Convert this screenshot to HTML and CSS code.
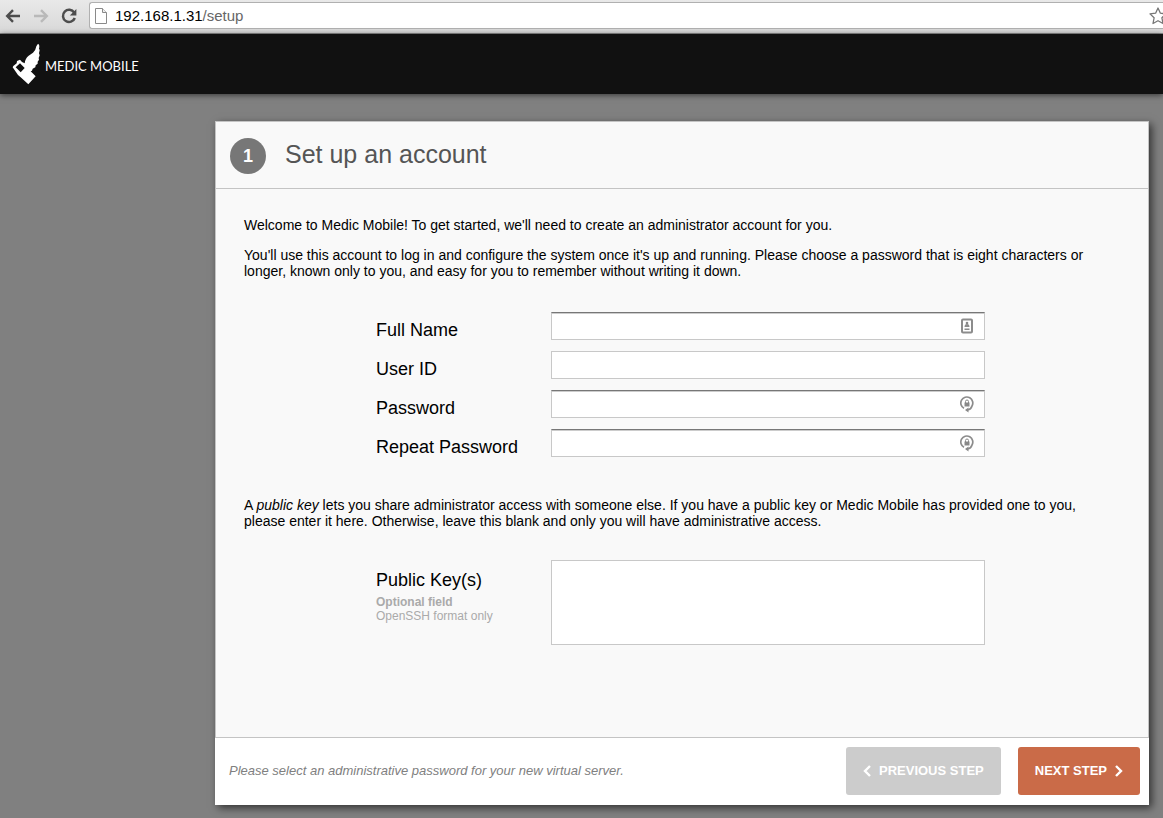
FILE: index.html
```html
<!DOCTYPE html>
<html lang="en">
<head>
<meta charset="utf-8">
<meta name="viewport" content="width=device-width, initial-scale=1">
<title>Medic Mobile Setup</title>
<link rel="stylesheet" href="styles.css">
</head>
<body>
<div class="toolbar">
  <button class="tool" type="button" aria-label="Back">
    <svg width="16" height="14" viewBox="0 0 16 14" fill="none" stroke="#4d4d4d" stroke-width="2.4"><path d="M8 1.2 2.2 7 8 12.8M2.5 7H15"/></svg>
  </button>
  <button class="tool" type="button" aria-label="Forward" disabled>
    <svg width="16" height="14" viewBox="0 0 16 14" fill="none" stroke="#b9b9b9" stroke-width="2.4"><path d="M8 1.2 13.8 7 8 12.8M13.5 7H1"/></svg>
  </button>
  <button class="tool" type="button" aria-label="Reload">
    <svg width="16" height="16" viewBox="0 0 16 16"><path d="M13.2 4.6A6.1 6.1 0 1 0 13.8 10" fill="none" stroke="#4d4d4d" stroke-width="2.5"/><path d="M15.4 1v6.6H8.8z" fill="#4d4d4d"/></svg>
  </button>
  <div class="address">
    <svg class="page-icon" width="12" height="16" viewBox="0 0 12 16" fill="#fff" stroke="#8a8a8a"><path d="M.5.5h7l4 4v11H.5z"/><path d="M7.5.5v4h4" fill="#eee"/></svg>
    <span class="url"><span class="host">192.168.1.31</span>/setup</span>
    <svg class="star" width="18" height="18" viewBox="0 0 18 18" fill="#fff" stroke="#777" stroke-width="1.3" stroke-linejoin="round"><path d="M9 1l2.4 5.2 5.6.7-4.1 3.9 1.1 5.7L9 13.7 4 16.5l1.1-5.7L1 6.9l5.6-.7z"/></svg>
  </div>
</div>

<header class="brand-bar">
  <a class="brand" href="#">
    <svg width="32" height="44" viewBox="0 0 96 132"><path fill="#fff" fill-rule="evenodd" d="M84 5Q90 8 87 20L89 24L87 34L89 40L86 48L87 53L83 59L83 65L77 70L76 76L68 80L66 86L62 88L77 103L55 127L32 106L24 99L8 76L10 72L20 64L21 57L30 53L36 60L44 64Q45 50 56 41L69 32Q77 26 79 13ZM17 76L30 64L44 78L32 91Z"/></svg>
    <span class="brand-name">MEDIC MOBILE</span>
  </a>
</header>

<main class="page">
  <form class="panel">
    <div class="panel-head">
      <span class="step">1</span>
      <h1>Set up an account</h1>
    </div>
    <div class="panel-body">
      <p>Welcome to Medic Mobile! To get started, we'll need to create an administrator account for you.</p>
      <p>You'll use this account to log in and configure the system once it's up and running. Please choose a password that is eight characters or longer, known only to you, and easy for you to remember without writing it down.</p>
      <div class="fields account">
        <label for="name">Full Name</label>
        <div class="control">
          <input class="inset" id="name" type="text">
          <svg class="badge" width="14" height="17" viewBox="0 0 14 17"><rect x="2" y="1.500" width="10" height="13" rx="1" fill="#fff" stroke="#8c8c8c" stroke-width="2"/><circle cx="7" cy="5" r="1.300" fill="#888"/><path d="M4.500 9Q4.500 6 7 6T9.500 9zM4.500 10.500h5V12h-5z" fill="#8c8c8c"/></svg>
        </div>
        <label for="user">User ID</label>
        <div class="control"><input id="user" type="text"></div>
        <label for="pass">Password</label>
        <div class="control">
          <input class="inset" id="pass" type="password">
          <svg class="badge" width="14" height="17" viewBox="0 0 14 17"><path d="M4 12.300A6 6 0 1 1 12 10Q11 13.500 7.500 14" fill="none" stroke="#8c8c8c" stroke-width="1.700"/><path d="M8.500 11.500v5L5 14z" fill="#888"/><path d="M4.500 6.500h5v4h-5z" fill="#888"/><path d="M5.500 7V5.500a1.500 1.500 0 0 1 3 0V7" fill="none" stroke="#888"/></svg>
        </div>
        <label for="repeat">Repeat Password</label>
        <div class="control">
          <input class="inset" id="repeat" type="password">
          <svg class="badge" width="14" height="17" viewBox="0 0 14 17"><path d="M4 12.300A6 6 0 1 1 12 10Q11 13.500 7.500 14" fill="none" stroke="#8c8c8c" stroke-width="1.700"/><path d="M8.500 11.500v5L5 14z" fill="#888"/><path d="M4.500 6.500h5v4h-5z" fill="#888"/><path d="M5.500 7V5.500a1.500 1.500 0 0 1 3 0V7" fill="none" stroke="#888"/></svg>
        </div>
      </div>
      <p>A <em>public key</em> lets you share administrator access with someone else. If you have a public key or Medic Mobile has provided one to you, please enter it here. Otherwise, leave this blank and only you will have administrative access.</p>
      <div class="fields keys">
        <label for="keys">Public Key(s)
          <small><b>Optional field</b><br>OpenSSH format only</small>
        </label>
        <textarea id="keys"></textarea>
      </div>
    </div>
    <div class="panel-foot">
      <p class="hint">Please select an administrative password for your new virtual server.</p>
      <button class="btn previous" type="button">
        <svg width="8" height="12" viewBox="0 0 8 12" fill="none" stroke="#fff" stroke-width="2.4"><path d="M7 1 2 6l5 5"/></svg>
        PREVIOUS STEP
      </button>
      <button class="btn next" type="button">
        NEXT STEP
        <svg width="8" height="12" viewBox="0 0 8 12" fill="none" stroke="#fff" stroke-width="2.4"><path d="M1 1l5 5-5 5"/></svg>
      </button>
    </div>
  </form>
</main>
</body>
</html>
```
FILE: styles.css
```css
* {
  box-sizing: border-box;
}

body {
  margin: 0;
  min-height: 100vh;
  display: flex;
  flex-direction: column;
  background: #808080;
  color: #000;
  font: 14px/16px "Liberation Sans", Arial, sans-serif;
}

button {
  font: inherit;
}

.toolbar {
  display: flex;
  align-items: center;
  gap: 12px;
  height: 34px;
  padding: 0 0 2px 5px;
  background: linear-gradient(#e9e9e9, #d8d8d8);
  border-bottom: 1px solid #8e8e8e;
}

.tool {
  display: flex;
  padding: 0;
  border: 0;
  background: none;
}

.address {
  flex: 1;
  display: flex;
  align-items: center;
  gap: 8px;
  height: 27px;
  padding-left: 5px;
  background: #fff;
  border: 1px solid #b0b0b0;
  border-right: 0;
  border-radius: 3px 0 0 3px;
  overflow: hidden;
}

.url {
  flex: 1;
  color: #666;
  font-size: 15px;
}

.host {
  color: #000;
}

.star {
  flex: none;
  margin-right: -4px;
}

.brand-bar {
  position: relative;
  display: flex;
  align-items: center;
  height: 60px;
  padding-left: 10px;
  background: #111;
  box-shadow: 0 1px 6px rgba(0, 0, 0, 0.6);
}

.brand {
  display: flex;
  align-items: center;
  gap: 3px;
  color: #fff;
  font: 13px/16px Lato, sans-serif;
  text-decoration: none;
}

.brand-name {
  padding-top: 4px;
}

.page {
  flex: 1;
  display: flex;
  padding: 27px 14px 13px 215px;
}

.panel {
  flex: 1;
  display: flex;
  flex-direction: column;
  background: #f9f9f9;
  box-shadow: 3px 3px 8px rgba(0, 0, 0, 0.6);
}

.panel-head {
  display: flex;
  align-items: flex-start;
  gap: 19px;
  height: 68px;
  padding: 16px 14px;
  border: 1px solid #c4c4c4;
}

.step {
  width: 36px;
  border-radius: 50%;
  background: #777;
  color: #fff;
  font-size: 18px;
  font-weight: bold;
  line-height: 36px;
  text-align: center;
}

h1 {
  margin: 0;
  color: #555;
  font-size: 25px;
  font-weight: normal;
  line-height: 32px;
}

.panel-body {
  flex: 1;
  padding: 28px 56px 0 28px;
  border: 1px solid #c4c4c4;
  border-top: 0;
}

p {
  margin: 0 0 14px;
}

.fields {
  display: grid;
  grid-template-columns: 163px minmax(0, 434px);
  gap: 11px 12px;
  padding-left: 132px;
}

.account {
  margin: 33px 0 40px;
}

.keys {
  margin-top: 31px;
}

label {
  padding-top: 8px;
  font-size: 18px;
  line-height: 20px;
}

.keys label {
  padding-top: 10px;
}

small {
  display: block;
  padding-top: 5px;
  color: #aaa;
  font-size: 12px;
  line-height: 14px;
}

.control {
  position: relative;
  display: flex;
}

input,
textarea {
  width: 100%;
  height: 28px;
  padding: 4px 8px;
  border: 1px solid #c8c8c8;
  border-radius: 0;
  background: #fff;
  font: inherit;
}

.inset {
  border-top-color: #777;
  box-shadow: inset 0 1px 0 #ccc;
}

textarea {
  display: block;
  height: 85px;
  resize: none;
}

.badge {
  position: absolute;
  top: 6px;
  right: 11px;
}

.panel-foot {
  display: flex;
  align-items: center;
  gap: 17px;
  padding: 9px 9px 10px 14px;
  background: #fff;
}

.hint {
  flex: 1;
  margin: 0;
  color: #808080;
  font-size: 13px;
  font-style: italic;
}

.btn {
  display: flex;
  align-items: center;
  gap: 8px;
  height: 48px;
  padding: 0 17px;
  border: 0;
  border-radius: 3px;
  color: #fff;
  font-size: 13px;
  font-weight: bold;
}

.previous {
  background: #ccc;
}

.next {
  background: #ca6b48;
}
```
